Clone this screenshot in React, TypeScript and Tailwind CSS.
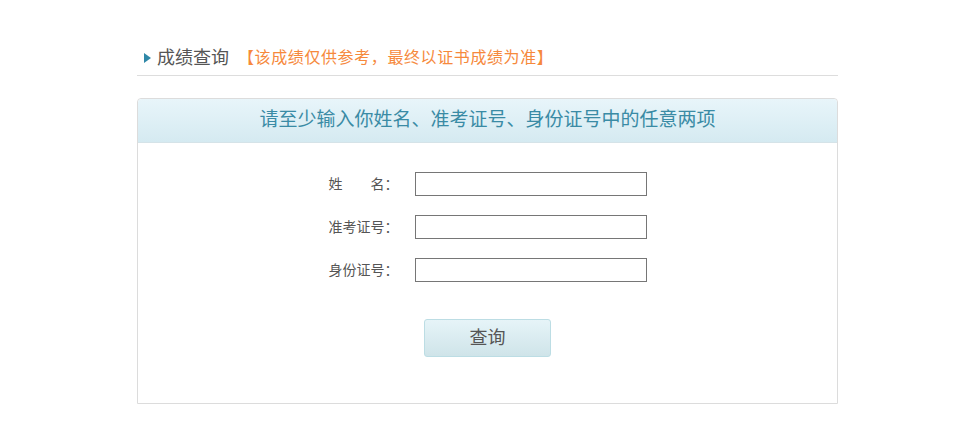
export default function App() {
  const fields = [
    { key: "name", label: "姓名" },
    { key: "ticket", label: "准考证号" },
    { key: "idcard", label: "身份证号" },
  ];

  return (
    <div className="min-h-[444px] w-full bg-white font-['Liberation_Sans','Noto_Sans_CJK_SC',sans-serif]">
      <div className="ml-[137px] w-[701px] pt-[46px]">
        {/* title */}
        <div className="flex h-[24px] items-center border-b border-[#dddddd] box-content pb-[5px]">
          <span className="ml-[7px] mr-[6px] h-0 w-0 border-y-[5px] border-l-[7px] border-y-transparent border-l-[#2f88a8]" />
          <span className="text-[18px] leading-[24px] text-[#555555]">成绩查询</span>
          <span className="ml-[9px] text-[16px] leading-[24px] tracking-[0.6px] text-[#f6893c]">【该成绩仅供参考，最终以证书成绩为准】</span>
        </div>

        {/* panel */}
        <div className="mt-[22px] rounded-t-[4px] border border-[#dcdcdc]">
          <div className="flex h-[44px] items-center justify-center rounded-t-[4px] border-b border-[#d5e3e8] bg-gradient-to-b from-[#e8f5fa] to-[#d5eaf1]">
            <span className="text-[19px] text-[#3a8ba5]">请至少输入你姓名、准考证号、身份证号中的任意两项</span>
          </div>

          <div className="flex flex-col items-center pt-[29px] pb-[46px]">
            <div className="flex flex-col gap-[19px]">
              {fields.map((f) => (
                <div key={f.key} className="flex h-[24px] items-center">
                  <label className="flex w-[70px] text-[14px] text-[#555555]">
                    {f.key === "name" ? (
                      <span className="flex w-[56px] justify-between">
                        <span>姓</span>
                        <span>名</span>
                      </span>
                    ) : (
                      <span>{f.label}</span>
                    )}
                    <span>：</span>
                  </label>
                  <input
                    type="text"
                    name={f.key}
                    className="ml-[16px] h-[24px] w-[232px] border border-[#767676] bg-white px-1 text-[14px] outline-none"
                  />
                </div>
              ))}
            </div>

            <button
              type="submit"
              className="mt-[37px] h-[38px] w-[127px] rounded-[3px] border border-[#bcdde4] bg-gradient-to-b from-[#e6f4f8] to-[#cfe4e9] text-[18px] text-[#555555]"
            >
              查询
            </button>
          </div>
        </div>
      </div>
    </div>
  );
}
